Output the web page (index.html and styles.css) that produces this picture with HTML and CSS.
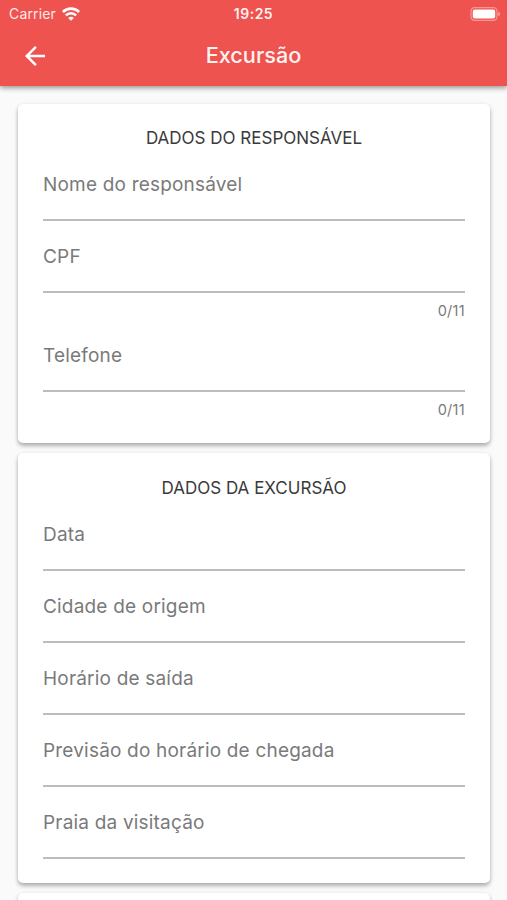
FILE: index.html
```html
<!DOCTYPE html>
<html lang="pt-BR">
<head>
    <meta charset="UTF-8">
    <meta name="viewport" content="width=device-width, initial-scale=1.0">
    <title>Excursão</title>
    <link rel="stylesheet" href="styles.css">
</head>
<body>
    <header class="header">
        <div class="status-bar">
            <div class="carrier">
                <span class="carrier-name">Carrier</span>
                <svg class="wifi" width="18" height="14" viewBox="0 0 18 14" fill="none" stroke="#fff" stroke-width="2.6">
                    <path d="M.9 5a11.4 11.4 0 0 1 16.2 0"/>
                    <path d="M3.9 8.4a7.2 7.2 0 0 1 10.2 0"/>
                    <path d="M9 13.8L6.2 11a3.9 3.9 0 0 1 5.6 0z" fill="#fff" stroke="none"/>
                </svg>
            </div>
            <span class="time">19:25</span>
            <svg class="battery" width="31" height="14" viewBox="0 0 31 14">
                <rect x="1" y=".7" width="26" height="12.6" rx="3.6" fill="none" stroke="#fff" stroke-opacity=".4" stroke-width="1.2"/>
                <rect x="2.8" y="2.5" width="22.4" height="9" rx="2" fill="#fff"/>
                <path d="M28.4 4.8v4.4c1-.4 1.6-1.2 1.6-2.2s-.6-1.8-1.6-2.2z" fill="#fff" fill-opacity=".5"/>
            </svg>
        </div>
        <div class="toolbar">
            <svg class="back" width="30" height="30" viewBox="0 0 24 24" fill="#fff">
                <path d="M20 11H7.83l5.59-5.59L12 4l-8 8 8 8 1.41-1.41L7.83 13H20v-2z"/>
            </svg>
            <h1 class="title">Excursão</h1>
        </div>
    </header>

    <main class="content">
        <section class="card">
            <h2 class="card-title">DADOS DO RESPONSÁVEL</h2>
            <div class="field"><span>Nome do responsável</span></div>
            <div class="field"><span>CPF</span></div>
            <div class="counter">0/11</div>
            <div class="field"><span>Telefone</span></div>
            <div class="counter">0/11</div>
        </section>

        <section class="card card-excursao">
            <h2 class="card-title">DADOS DA EXCURSÃO</h2>
            <div class="field"><span>Data</span></div>
            <div class="field"><span>Cidade de origem</span></div>
            <div class="field"><span>Horário de saída</span></div>
            <div class="field"><span>Previsão do horário de chegada</span></div>
            <div class="field"><span>Praia da visitação</span></div>
        </section>

        <section class="card card-next"></section>
    </main>
</body>
</html>
```

FILE: styles.css
```css
* { box-sizing: border-box; }
body {
    margin: 0;
    height: 900px;
    overflow: hidden;
    display: flex;
    flex-direction: column;
    background: #fafafa;
    font-family: Inter, Roboto, sans-serif;
}
.header {
    flex: none;
    height: 86px;
    background: #ef5350;
    color: #fff;
    box-shadow: 0 2px 5px rgba(0, 0, 0, 0.4);
    z-index: 1;
}
.status-bar {
    display: grid;
    grid-template-columns: 1fr auto 1fr;
    align-items: center;
    height: 26px;
    padding: 1px 6px 0 9px;
}
.carrier {
    display: flex;
    align-items: center;
    gap: 6px;
}
.carrier-name {
    font-size: 14px;
    letter-spacing: 0.15px;
    opacity: 0.88;
}
.time {
    margin-right: 3px;
    font-size: 14px;
    font-weight: 600;
    letter-spacing: 0.5px;
    opacity: 0.92;
}
.battery { justify-self: end; }
.toolbar {
    display: grid;
    grid-template-columns: 30px 1fr 30px;
    align-items: center;
    height: 60px;
    padding: 0 20px;
}
.title {
    margin: 0 0 2px;
    text-align: center;
    font-size: 21.7px;
    font-weight: 500;
    opacity: 0.93;
}
.content {
    flex: 1;
    display: flex;
    flex-direction: column;
    gap: 10px;
    min-height: 0;
    padding: 18px 17px 0 18px;
}
.card {
    flex: none;
    padding: 21px 25px 24px;
    background: #fff;
    border-radius: 5px;
    box-shadow: 0 3px 4px rgba(0, 0, 0, 0.26), 0 1px 4px rgba(0, 0, 0, 0.1);
}
.card-excursao { padding-top: 22px; }
.card-title {
    margin: 0;
    height: 24px;
    line-height: 26px;
    text-align: center;
    font-size: 17px;
    font-weight: 400;
    color: #3a3a3a;
}
.field {
    height: 72px;
    padding-top: 23px;
    border-bottom: 2px solid #bdbdbd;
    font-size: 19px;
    line-height: 26px;
    letter-spacing: 0.19px;
    color: #7a7a7a;
}
.counter {
    height: 27px;
    padding-top: 8px;
    text-align: right;
    font-size: 14.5px;
    line-height: 20px;
    letter-spacing: 0.3px;
    color: #7a7a7a;
}
.card-next {
    flex: 1;
    padding: 0;
    border-radius: 5px 5px 0 0;
}
```
